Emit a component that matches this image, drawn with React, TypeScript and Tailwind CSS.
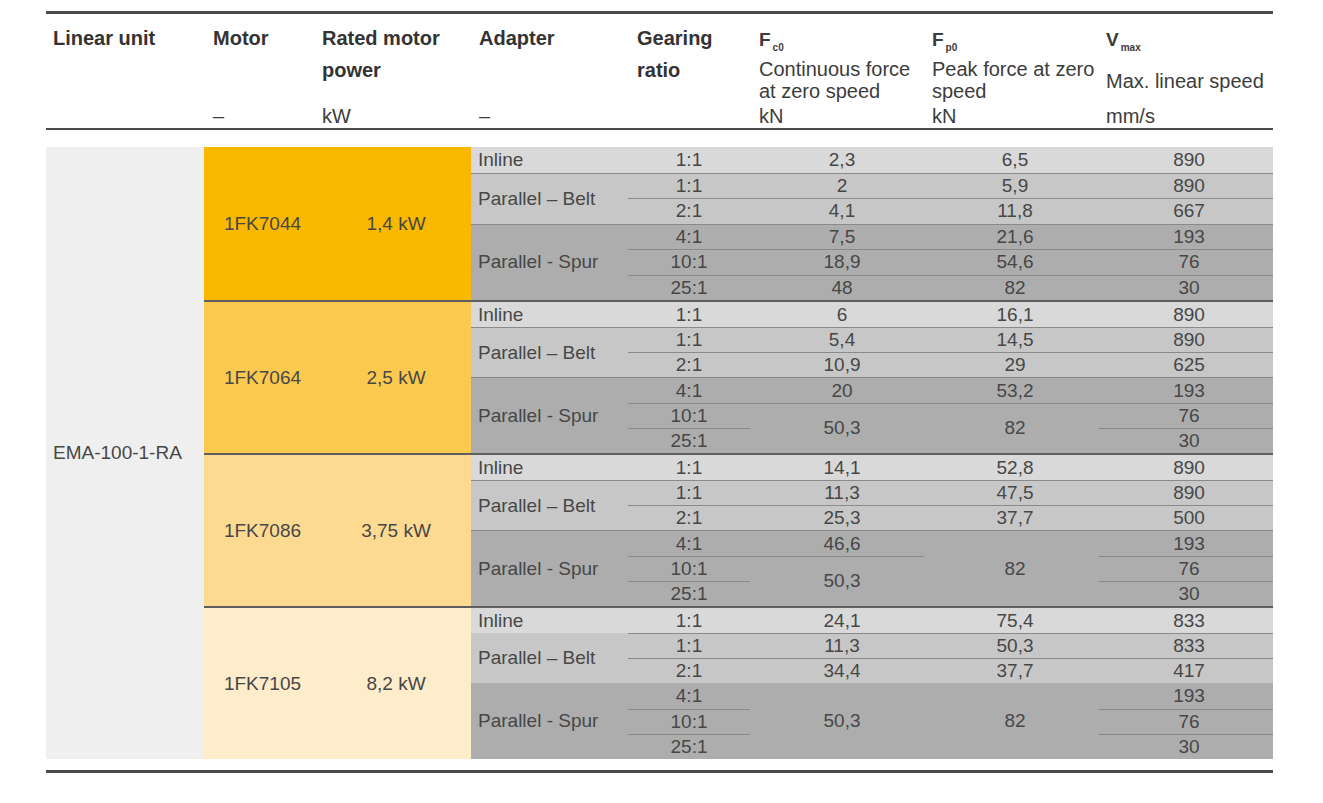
import type { ReactNode } from "react";

type Cell = {
  col: number;
  row: number;
  span?: number;
  text: string;
  line?: boolean;
};

type Group = {
  motor: string;
  power: string;
  tint: string;
  cells: Cell[];
};

// full class names so tailwind picks them up
const colStart = ["", "col-start-1", "col-start-2", "col-start-3", "col-start-4", "col-start-5"];
const rowStart = ["", "row-start-1", "row-start-2", "row-start-3", "row-start-4", "row-start-5", "row-start-6"];
const rowSpan = ["", "row-span-1", "row-span-2", "row-span-3"];
const rowBg = ["", "bg-[#d9d9d9]", "bg-[#c7c7c7]", "bg-[#c7c7c7]", "bg-[#adadad]", "bg-[#adadad]", "bg-[#adadad]"];
const colAlign = [
  "",
  "justify-start pl-[7px]",
  "justify-center",
  "justify-center pl-[10px]",
  "justify-center pl-[7px]",
  "justify-center pl-[6px]",
];

const ratios = ["1:1", "1:1", "2:1", "4:1", "10:1", "25:1"];

function adapters(lines = true): Cell[] {
  return [
    { col: 1, row: 1, text: "Inline" },
    { col: 1, row: 2, span: 2, text: "Parallel – Belt", line: lines },
    { col: 1, row: 4, span: 3, text: "Parallel - Spur", line: lines },
  ];
}

function column(col: number, values: (string | [string, number])[], startRow = 1): Cell[] {
  const out: Cell[] = [];
  let row = startRow;
  for (const v of values) {
    const [text, span] = typeof v === "string" ? [v, 1] : v;
    out.push({ col, row, span, text, line: row > 1 });
    row += span;
  }
  return out;
}

const groups: Group[] = [
  {
    motor: "1FK7044",
    power: "1,4 kW",
    tint: "bg-[#fab800]",
    cells: [
      ...adapters(),
      ...column(2, ratios),
      ...column(3, ["2,3", "2", "4,1", "7,5", "18,9", "48"]),
      ...column(4, ["6,5", "5,9", "11,8", "21,6", "54,6", "82"]),
      ...column(5, ["890", "890", "667", "193", "76", "30"]),
    ],
  },
  {
    motor: "1FK7064",
    power: "2,5 kW",
    tint: "bg-[#fcc94f]",
    cells: [
      ...adapters(),
      ...column(2, ratios),
      ...column(3, ["6", "5,4", "10,9", "20", ["50,3", 2]]),
      ...column(4, ["16,1", "14,5", "29", "53,2", ["82", 2]]),
      ...column(5, ["890", "890", "625", "193", "76", "30"]),
    ],
  },
  {
    motor: "1FK7086",
    power: "3,75 kW",
    tint: "bg-[#fdda92]",
    cells: [
      ...adapters(),
      ...column(2, ratios),
      ...column(3, ["14,1", "11,3", "25,3", "46,6", ["50,3", 2]]),
      ...column(4, ["52,8", "47,5", "37,7", ["82", 3]]),
      ...column(5, ["890", "890", "500", "193", "76", "30"]),
    ],
  },
  {
    motor: "1FK7105",
    power: "8,2 kW",
    tint: "bg-[#feecca]",
    cells: [
      ...adapters(false),
      ...column(2, ratios),
      ...column(3, ["24,1", "11,3", "34,4", ["50,3", 3]]),
      ...column(4, ["75,4", "50,3", "37,7", ["82", 3]]),
      ...column(5, ["833", "833", "417", "193", "76", "30"]),
    ].map((c) => (c.row === 4 ? { ...c, line: false } : c)),
  },
];

function Sym({ base, sub }: { base: string; sub: string }) {
  return (
    <div className="h-[36px] font-bold leading-[36px] text-[19px]">
      {base}
      <span className="relative top-[5px] ml-[2px] text-[10px]">{sub}</span>
    </div>
  );
}

function HeadCell({ children, unit }: { children?: ReactNode; unit?: string }) {
  return (
    <div className="flex flex-col pl-[7px] pt-[8px] pb-px">
      <div className="flex-1">{children}</div>
      <div className="h-[22px] leading-[22px]">{unit}</div>
    </div>
  );
}

function Bold({ children }: { children: ReactNode }) {
  return <div className="font-bold leading-[32px] text-[#333]">{children}</div>;
}

function Header() {
  return (
    <div className="mt-[11px] grid h-[119px] grid-cols-[160px_109px_157px_158px_122px_173px_174px_174px] border-t-[3px] border-b-2 border-[#4b4b4b] text-[20px] text-[#3c3c3c]">
      <HeadCell>
        <Bold>Linear unit</Bold>
      </HeadCell>
      <HeadCell unit="–">
        <Bold>Motor</Bold>
      </HeadCell>
      <HeadCell unit="kW">
        <Bold>
          Rated motor
          <br />
          power
        </Bold>
      </HeadCell>
      <HeadCell unit="–">
        <Bold>Adapter</Bold>
      </HeadCell>
      <HeadCell>
        <Bold>
          Gearing
          <br />
          ratio
        </Bold>
      </HeadCell>
      <HeadCell unit="kN">
        <Sym base="F" sub="c0" />
        <div className="leading-[22px]">
          Continuous force
          <br />
          at zero speed
        </div>
      </HeadCell>
      <HeadCell unit="kN">
        <Sym base="F" sub="p0" />
        <div className="leading-[22px]">
          Peak force at zero
          <br />
          speed
        </div>
      </HeadCell>
      <HeadCell unit="mm/s">
        <Sym base="V" sub="max" />
        <div className="mt-[12px] leading-[22px]">Max. linear speed</div>
      </HeadCell>
    </div>
  );
}

function GroupBlock({ group, first }: { group: Group; first: boolean }) {
  return (
    <div
      className={
        "grid h-[153px] grid-cols-[117px_150px_157px_122px_174px_175px_174px] grid-rows-1 overflow-hidden " +
        (first ? "" : "border-t-2 border-[#5e5e5e]")
      }
    >
      <div className={`col-span-2 grid grid-cols-[117px_150px] items-center ${group.tint}`}>
        <div className="text-center">{group.motor}</div>
        <div className="text-center">{group.power}</div>
      </div>
      <div className="col-span-5 grid h-full grid-cols-[157px_122px_174px_175px_174px] grid-rows-6">
        {group.cells.map((c, i) => (
          <div
            key={i}
            className={[
              "flex min-h-0 items-center",
              colStart[c.col],
              rowStart[c.row],
              rowSpan[c.span ?? 1],
              rowBg[c.row],
              colAlign[c.col],
              c.line ? "border-t border-[#8a8a8a]" : "",
            ].join(" ")}
          >
            {c.text}
          </div>
        ))}
      </div>
    </div>
  );
}

export default function App() {
  return (
    <div className="min-h-[803px] bg-white font-['Liberation_Sans',Arial,sans-serif]">
      <div className="ml-[46px] w-[1227px]">
        <Header />

        <div className="mt-[17px] grid h-[612px] grid-cols-[158px_1069px] text-[19px] leading-[22px] text-[#474747]">
          <div className="flex items-center bg-[#efefef] pl-[7px]">EMA-100-1-RA</div>
          <div className="flex flex-col">
            {groups.map((g, i) => (
              <GroupBlock key={g.motor} group={g} first={i === 0} />
            ))}
          </div>
        </div>

        <div className="mt-[11px] border-t-[3px] border-[#4b4b4b]" />
      </div>
    </div>
  );
}
